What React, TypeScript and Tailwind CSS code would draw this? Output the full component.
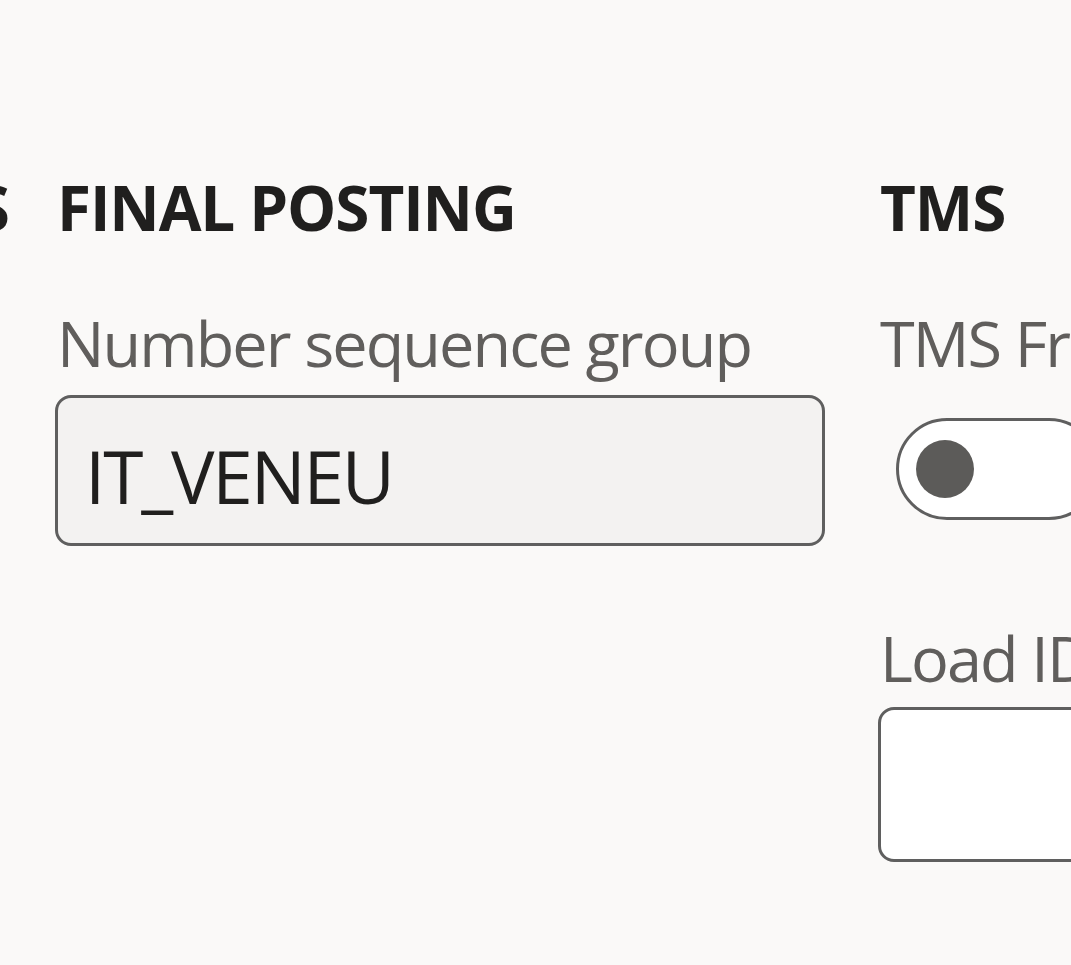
export default function App() {
    return (
        <main
            className="w-[1071px] h-[965px] overflow-hidden bg-[#faf9f8] text-[#201f1e]"
            style={{ fontFamily: '"Open Sans", "Noto Sans", sans-serif' }}
        >
            <div className="flex flex-row items-start pt-[176px]">
                {/* tail of the previous section header */}
                <div className="w-[9px] shrink-0 overflow-hidden flex justify-end">
                    <h2 className="text-[62px] leading-[62px] font-bold tracking-[-1px] whitespace-nowrap">LINES</h2>
                </div>

                {/* Final posting */}
                <section className="ml-[46px] w-[770px] shrink-0 flex flex-col">
                    <h2 className="pl-[2px] text-[62px] leading-[62px] font-bold tracking-[-1.1px] whitespace-nowrap">FINAL POSTING</h2>
                    <label className="mt-[73px] pl-[2px] text-[63px] leading-[63px] tracking-[-1.9px] text-[#605e5c] whitespace-nowrap">
                        Number sequence group
                    </label>
                    <div className="mt-[21px] h-[151px] rounded-[16px] border-[3px] border-[#5f5f5f] bg-[#f3f2f1] flex items-center pl-[27px] pt-[10px]">
                        <span className="text-[73px] leading-[73px] tracking-[-2.2px] whitespace-nowrap">IT_VENEU</span>
                    </div>
                </section>

                {/* TMS */}
                <section className="ml-[53px] w-[420px] shrink-0 flex flex-col">
                    <h2 className="pl-[2px] text-[62px] leading-[62px] font-bold tracking-[-1.1px] whitespace-nowrap">TMS</h2>
                    <label className="mt-[73px] pl-[2px] text-[63px] leading-[63px] tracking-[-1.9px] text-[#605e5c] whitespace-nowrap">
                        TMS Freight
                    </label>
                    <div className="mt-[44px] ml-[18px] w-[204px] h-[102px] rounded-full border-[3px] border-[#5f5f5f] bg-white flex items-center pl-[17px]">
                        <span className="block w-[58px] h-[58px] rounded-full bg-[#5c5b59]" />
                    </div>
                    <label className="mt-[106px] pl-[2px] text-[63px] leading-[63px] tracking-[-1.9px] text-[#605e5c] whitespace-nowrap">
                        Load ID
                    </label>
                    <div className="mt-[18px] h-[155px] rounded-[16px] border-[3px] border-[#5f5f5f] bg-white" />
                </section>
            </div>
        </main>
    );
}
